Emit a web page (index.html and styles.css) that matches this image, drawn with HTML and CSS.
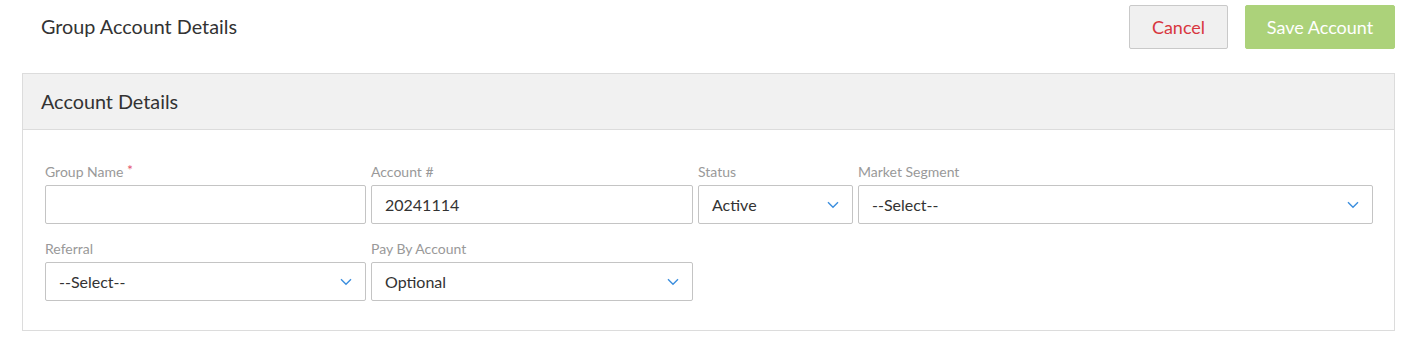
FILE: index.html
```html
<!DOCTYPE html>
<html lang="en">
<head>
  <meta charset="UTF-8" />
  <meta name="viewport" content="width=device-width, initial-scale=1" />
  <title>Group Account Details</title>
  <link rel="stylesheet" href="styles.css">
</head>
<body>
  <div class="topbar">
    <h1>Group Account Details</h1>
    <div class="actions">
      <button type="button" class="btn btn-cancel">Cancel</button>
      <button type="submit" class="btn btn-save">Save Account</button>
    </div>
  </div>

  <div class="panel">
    <div class="panel-head">Account Details</div>
    <div class="panel-body">
      <div class="field">
        <label>Group Name <span class="req">*</span></label>
        <div class="box"></div>
      </div>
      <div class="field">
        <label>Account #</label>
        <div class="box">20241114</div>
      </div>
      <div class="field">
        <label>Status</label>
        <div class="box select">Active
          <svg class="chev" width="12" height="8" viewBox="0 0 12 8"><path d="M1 1.2 L6 6.2 L11 1.2" fill="none" stroke="#3b8ede" stroke-width="1.4"/></svg>
        </div>
      </div>
      <div class="field">
        <label>Market Segment</label>
        <div class="box select">--Select--
          <svg class="chev" width="12" height="8" viewBox="0 0 12 8"><path d="M1 1.2 L6 6.2 L11 1.2" fill="none" stroke="#3b8ede" stroke-width="1.4"/></svg>
        </div>
      </div>
      <div class="field">
        <label>Referral</label>
        <div class="box select">--Select--
          <svg class="chev" width="12" height="8" viewBox="0 0 12 8"><path d="M1 1.2 L6 6.2 L11 1.2" fill="none" stroke="#3b8ede" stroke-width="1.4"/></svg>
        </div>
      </div>
      <div class="field">
        <label>Pay By Account</label>
        <div class="box select">Optional
          <svg class="chev" width="12" height="8" viewBox="0 0 12 8"><path d="M1 1.2 L6 6.2 L11 1.2" fill="none" stroke="#3b8ede" stroke-width="1.4"/></svg>
        </div>
      </div>
    </div>
  </div>
</body>
</html>
```

FILE: styles.css
```css
* {
  box-sizing: border-box;
}

body {
  margin: 0;
  font-family: Lato, "Open Sans", sans-serif;
  color: #333;
  background: #fff;
}

.topbar {
  display: flex;
  justify-content: space-between;
  align-items: center;
  padding: 5px 17px 0 41px;
}

h1 {
  margin: 0 0 2px;
  font-size: 19.8px;
  font-weight: normal;
  color: #333;
}

.actions {
  display: flex;
  gap: 17px;
}

.btn {
  height: 44px;
  font-family: inherit;
  font-size: 18px;
  border-radius: 2px;
  cursor: pointer;
}

.btn-cancel {
  width: 99px;
  background: #f0f0f0;
  border: 1px solid #c9c9c9;
  color: #d8373f;
}

.btn-save {
  width: 150px;
  background: #acd27a;
  border: 1px solid #acd27a;
  color: #fff;
}

.panel {
  margin: 24px 17px 0 22px;
  border: 1px solid #dcdcdc;
}

.panel-head {
  height: 56px;
  padding: 0 18px 2px;
  display: flex;
  align-items: center;
  background: #f1f1f1;
  border-bottom: 1px solid #dcdcdc;
  font-size: 19.8px;
  color: #333;
}

.panel-body {
  display: grid;
  grid-template-columns: 321px 322px 155px 1fr;
  column-gap: 5px;
  row-gap: 16px;
  padding: 33px 21px 29px 22px;
}

.field label {
  display: block;
  height: 18px;
  margin-bottom: 4px;
  font-size: 14px;
  line-height: 18px;
  color: #999;
}

.req {
  color: #e4566f;
  font-size: 14px;
  vertical-align: top;
  position: relative;
  top: -2px;
}

.box {
  height: 39px;
  border: 1px solid #c4c4c4;
  border-radius: 2px;
  padding: 0 13px;
  display: flex;
  align-items: center;
  justify-content: space-between;
  font-size: 16px;
  color: #333;
}
```
